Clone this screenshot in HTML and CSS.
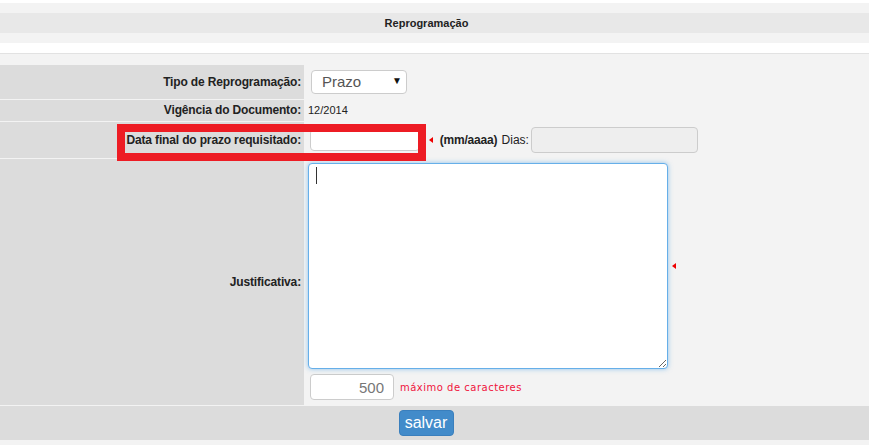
FILE: index.html
```html
<!DOCTYPE html>
<html lang="pt">
<head>
  <meta charset="UTF-8">
  <meta name="viewport" content="width=device-width, initial-scale=1.0">
  <title>Reprogramação</title>
  <link rel="stylesheet" href="styles.css">
</head>
<body>
<div class="top-strip"></div>
<div class="band-light"></div>
<div class="section-title">Reprogramação</div>
<div class="band-light"></div>
<div class="band-white"></div>

<div class="form-wrap">
  <table class="form-table">
    <tbody>
    <tr class="row-tipo">
      <td class="label">Tipo de Reprogramação:</td>
      <td class="value">
        <span class="select-wrap">
          <select class="field select">
            <option>Prazo</option>
          </select>
        </span>
      </td>
    </tr>
    <tr class="row-vigencia">
      <td class="label">Vigência do Documento:</td>
      <td class="value"><span class="plain">12/2014</span></td>
    </tr>
    <tr class="row-data">
      <td class="label">Data final do prazo requisitado:</td>
      <td class="value">
        <input class="field date-input" type="text">
        <span class="required"></span>
        <strong class="hint">(mm/aaaa)</strong>
        <span class="dias-label">Dias:</span>
        <input class="field dias-input" type="text" disabled>
      </td>
    </tr>
    <tr class="row-justificativa">
      <td class="label">Justificativa:</td>
      <td class="value">
        <div class="ta-line">
          <span class="ta-wrap"><textarea class="field textarea"></textarea></span>
          <span class="required"></span>
        </div>
        <div class="counter-line">
          <input class="field counter" type="text" value="500">
          <span class="counter-text">máximo de caracteres</span>
        </div>
      </td>
    </tr>
    <tr class="row-actions">
      <td colspan="2" class="actions">
        <button class="btn-salvar">salvar</button>
      </td>
    </tr>
    </tbody>
  </table>

  <!-- destaque em vermelho -->
  <div class="highlight"></div>
</div>
</body>
</html>
```

FILE: styles.css
```css
* {
  margin: 0;
  padding: 0;
  box-sizing: border-box;
}

body {
  background: #f3f3f3;
  color: #222;
  font-family: "Liberation Sans", Arial, sans-serif;
  font-size: 12px;
}

.top-strip {
  height: 3px;
  background: #fff;
}

.band-light {
  height: 10px;
  background: #f3f3f3;
}

.band-white {
  height: 11px;
  background: #fff;
  border-bottom: 1px solid #e2e2e2;
  margin-bottom: 11px;
}

.section-title {
  height: 20px;
  line-height: 20px;
  background: #e8e8e8;
  text-align: center;
  font-size: 11px;
  font-weight: bold;
  padding-right: 16px;
}

.form-wrap {
  position: relative;
}

.form-table {
  width: 100%;
  border-collapse: collapse;
}

.form-table tr + tr td {
  border-top: 1px solid #f3f3f3;
}

.label {
  width: 304px;
  background: #dcdcdc;
  text-align: right;
  font-weight: bold;
  letter-spacing: -0.15px;
  padding-right: 3px;
  vertical-align: middle;
}

.value {
  background: #f3f3f3;
  padding-left: 4px;
  vertical-align: middle;
}

.row-tipo td { height: 34px; }
.row-vigencia td { height: 22px; }
.row-data td { height: 37px; }
.row-justificativa td { height: 247px; }
.row-actions td { height: 35px; }

.field {
  font-family: "Liberation Sans", Arial, sans-serif;
  border: 1px solid #ccc;
  border-radius: 4px;
  background: #fff;
  outline: none;
}

.select-wrap {
  position: relative;
  display: inline-block;
  margin-left: 3px;
}

.select-wrap::after {
  content: "▼";
  position: absolute;
  right: 5px;
  top: 5px;
  font-size: 10px;
  color: #111;
  pointer-events: none;
}

.select {
  appearance: none;
  -webkit-appearance: none;
  width: 96px;
  height: 24px;
  padding-left: 10px;
  font-size: 15px;
  color: #555;
}

.plain {
  font-size: 11px;
}

.date-input {
  width: 110px;
  height: 22px;
  margin-left: 2px;
  vertical-align: middle;
}

.required {
  display: inline-block;
  width: 0;
  height: 0;
  border-top: 3px solid transparent;
  border-bottom: 3px solid transparent;
  border-right: 4px solid #e00;
  vertical-align: middle;
}

.row-data .required {
  margin-left: 6px;
}

.hint {
  margin-left: 3px;
  letter-spacing: -0.2px;
  vertical-align: middle;
}

.dias-label {
  margin-left: 1px;
  vertical-align: middle;
}

.dias-input {
  width: 167px;
  height: 26px;
  margin-left: -1px;
  background: #eee;
  vertical-align: middle;
}

.ta-line {
  display: flex;
  align-items: center;
  gap: 4px;
}

.ta-wrap {
  position: relative;
  display: inline-block;
}

.ta-wrap::before {
  content: "";
  position: absolute;
  left: 8px;
  top: 4px;
  width: 1px;
  height: 17px;
  background: #333;
}

.textarea {
  display: block;
  width: 360px;
  height: 206px;
  border: 1px solid #66afe9;
  box-shadow: 0 0 5px rgba(102, 175, 233, 0.7);
  resize: both;
}

.counter-line {
  display: flex;
  align-items: center;
  margin-top: 5px;
  padding-left: 2px;
}

.counter {
  width: 84px;
  height: 26px;
  text-align: right;
  padding-right: 9px;
  font-size: 15px;
  color: #777;
}

.counter-text {
  margin-left: 6px;
  font-family: "DejaVu Sans", Verdana, sans-serif;
  font-size: 10px;
  letter-spacing: 0.5px;
  color: #f0143c;
}

.actions {
  background: #dcdcdc;
  text-align: center;
  padding-right: 17px;
  vertical-align: middle;
}

.btn-salvar {
  width: 55px;
  height: 26px;
  background: #428bca;
  border: 1px solid #3a7fbd;
  border-radius: 4px;
  color: #fff;
  font-family: "Liberation Sans", Arial, sans-serif;
  font-size: 16px;
  cursor: pointer;
}

.highlight {
  position: absolute;
  left: 117px;
  top: 59px;
  width: 309px;
  height: 37px;
  border: 8px solid #ed1c24;
}
```
